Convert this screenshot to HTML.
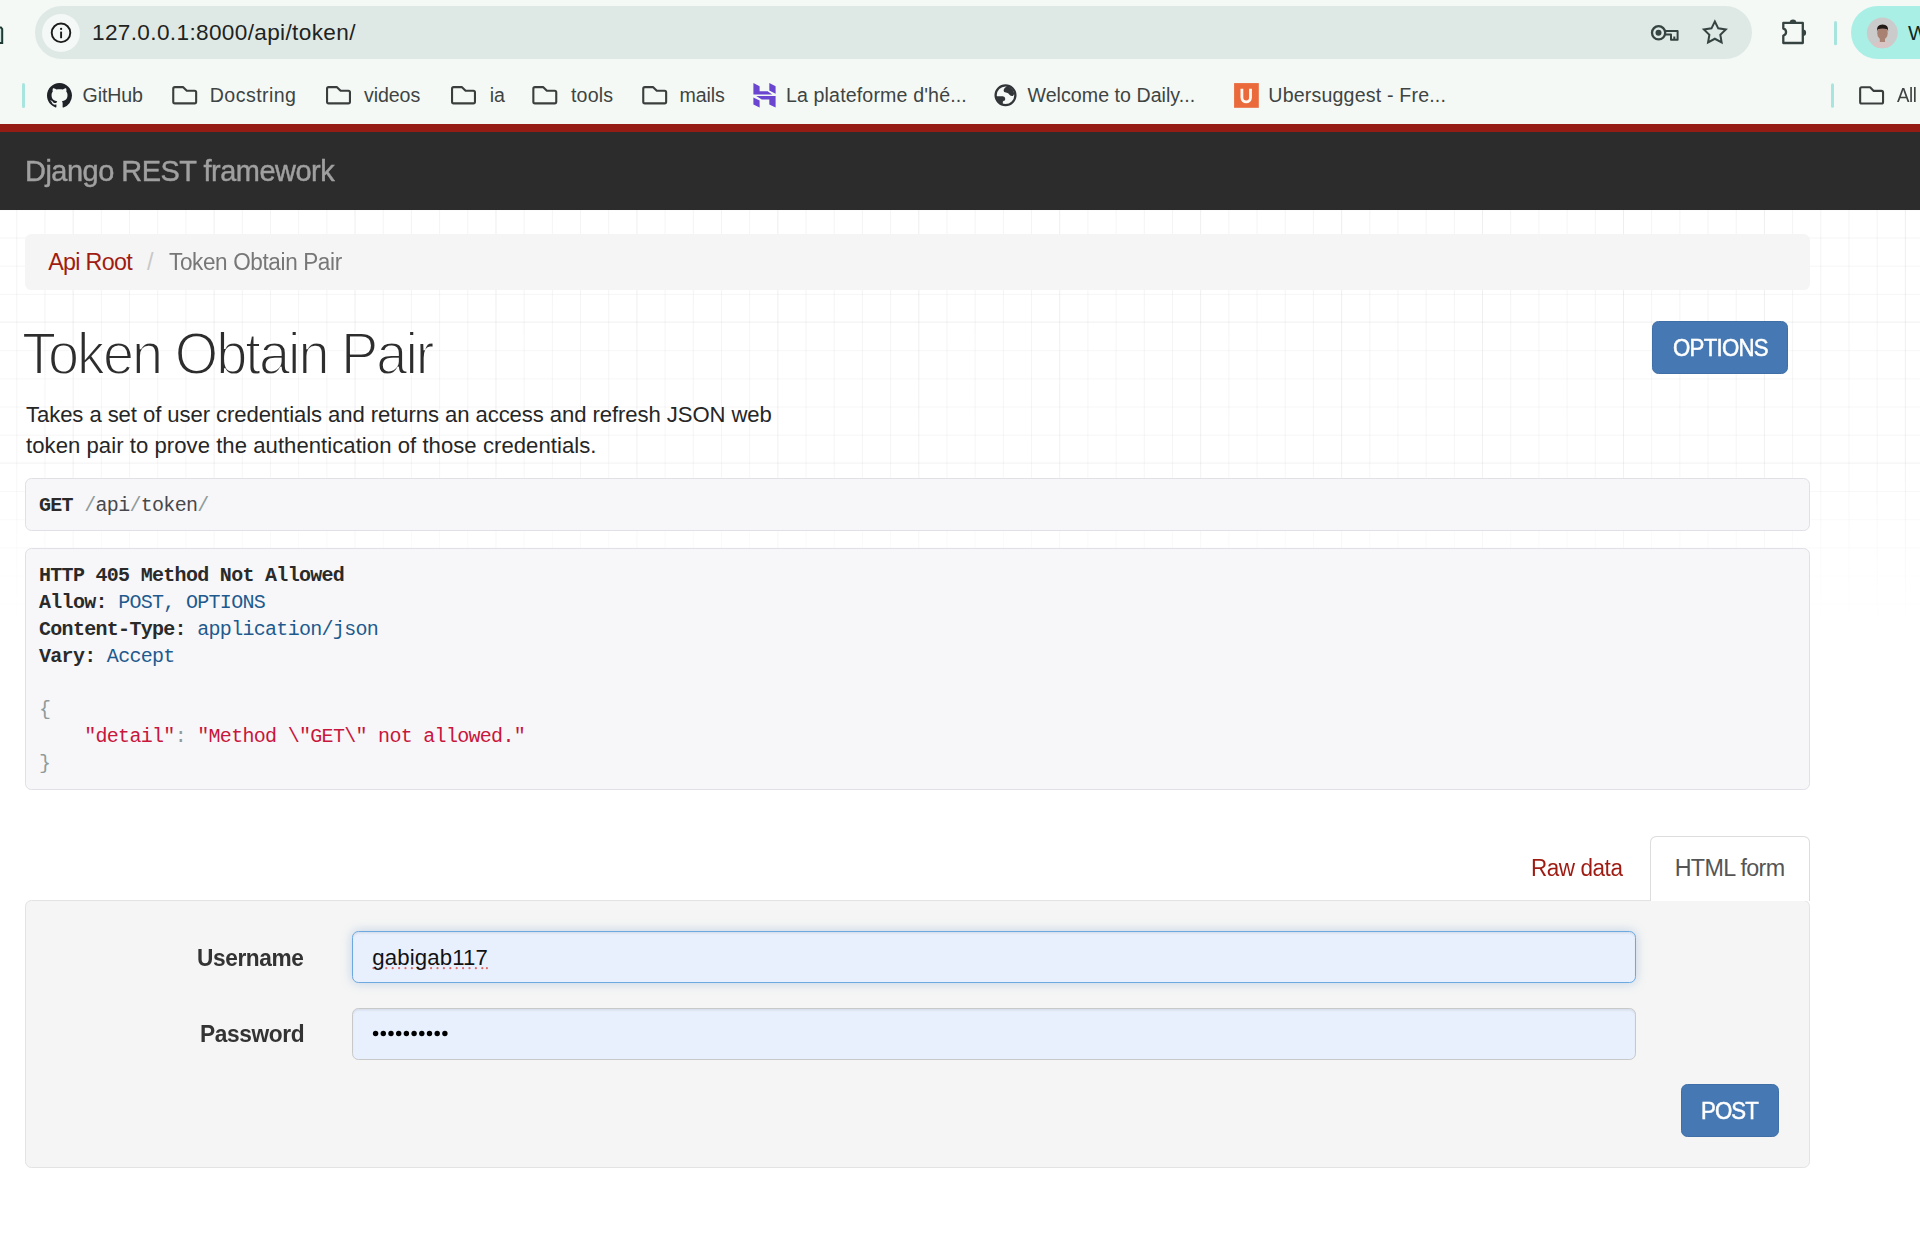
<!DOCTYPE html>
<html><head><meta charset="utf-8">
<style>
html,body{margin:0;padding:0;width:1920px;height:1236px;overflow:hidden;background:#fff;position:relative;font-family:"Liberation Sans",sans-serif}
.a{position:absolute;box-sizing:border-box}
.t{position:absolute;white-space:pre;line-height:1;font-family:"Liberation Sans",sans-serif}
.m{position:absolute;white-space:pre;line-height:1;font-family:"Liberation Mono",monospace;font-size:20px;letter-spacing:-0.7px;color:#48484c}
.m b{color:#2a2a2a;font-weight:700}
.m .lit{color:#1e5a8e}
.m .pun{color:#8f9b9b}
.m .str{color:#c8163c}
</style></head><body>
<!-- browser toolbar -->
<div class="a" style="left:0;top:0;width:1920px;height:124px;background:#f4f9f6"></div>
<div class="a" style="left:35px;top:6px;width:1717px;height:53px;border-radius:26.5px;background:#dee9e5"></div>
<div class="a" style="left:42px;top:14px;width:38px;height:38px;border-radius:19px;background:#f4f8f6"></div>
<div class="a" style="left:1851px;top:6px;width:120px;height:53px;border-radius:26.5px;background:#aaefe5"></div>
<svg class="a" style="left:0;top:0" width="1920" height="124" viewBox="0 0 1920 124">
  <defs>
    <path id="fold" d="M1.05 2.6Q1.05 1.05 2.6 1.05L11 1.05L14.6 4.7L22.4 4.7Q23.95 4.7 23.95 6.2L23.95 15.7Q23.95 17.25 22.4 17.25L2.6 17.25Q1.05 17.25 1.05 15.7Z" fill="none" stroke="#3a3f3d" stroke-width="2.1" stroke-linejoin="round"/>
  </defs>
  <!-- partial left icon -->
  <path d="M-4 27.5 L1 27.5 L2.2 29 L2.2 43 L-4 43" fill="#d4e6e1" stroke="#1f3a33" stroke-width="2"/>
  <!-- info icon -->
  <circle cx="61" cy="32.8" r="9.3" fill="none" stroke="#1b1b1b" stroke-width="1.9"/>
  <circle cx="61.1" cy="28.9" r="1.15" fill="#1b1b1b"/>
  <rect x="60.15" y="31.6" width="1.9" height="6.6" fill="#1b1b1b"/>
  <!-- key -->
  <g fill="none" stroke="#354341" stroke-width="2">
    <circle cx="1658.6" cy="32.8" r="6.6" stroke-width="2.3"/>
    <path d="M1665.2 30.9H1677.6V39.7H1671V34.5H1665.6" stroke-linejoin="round"/>
    <path d="M1674.3 36.5V39.7"/>
  </g>
  <circle cx="1658.5" cy="32.8" r="3" fill="#354341"/>
  <!-- star -->
  <polygon points="1714.85,21.50 1718.23,28.35 1725.79,29.45 1720.32,34.78 1721.61,42.30 1714.85,38.75 1708.09,42.30 1709.38,34.78 1703.91,29.45 1711.47,28.35" fill="none" stroke="#354341" stroke-width="2" stroke-linejoin="miter"/>
  <!-- puzzle -->
  <path d="M1783.3 22.9H1802.8V43H1783.3V35.6A3.6 3.6 0 0 0 1783.3 28.6Z" fill="none" stroke="#354341" stroke-width="2.3" stroke-linejoin="round"/>
  <path d="M1789.7 22.9A3.3 3.3 0 0 1 1796.3 22.9Z" fill="#354341"/>
  <path d="M1802.8 29.4A3.3 3.3 0 0 1 1802.8 36Z" fill="#354341"/>
  <!-- toolbar separator -->
  <rect x="1834" y="21" width="3" height="24.3" rx="1.5" fill="#a6e4dd"/>
  <!-- avatar -->
  <clipPath id="av"><circle cx="1882.3" cy="32.85" r="15.45"/></clipPath>
  <g clip-path="url(#av)">
    <rect x="1866" y="17" width="33" height="33" fill="#cbcbcb"/>
    <ellipse cx="1882.3" cy="47.5" rx="11.5" ry="6.5" fill="#d9c4c6"/>
    <rect x="1879.8" y="37" width="5.2" height="5" fill="#a88273"/>
    <ellipse cx="1882.5" cy="33.2" rx="5.2" ry="6.6" fill="#a98172"/>
    <path d="M1876.9 31.5 Q1876.3 24.6 1882.6 24.6 Q1888.8 24.6 1888.2 31.5 L1887.2 29.2 Q1882.6 27.6 1877.9 29.2Z" fill="#221a17"/>
  </g>
  <!-- bookmark separators -->
  <rect x="22" y="83" width="3" height="25" rx="1.5" fill="#a8e5de"/>
  <rect x="1831" y="83.3" width="3" height="24.5" rx="1.5" fill="#a8e5de"/>
  <!-- github -->
  <g transform="translate(47,83.1) scale(1.5625)">
    <path fill="#1f2328" d="M8 0C3.58 0 0 3.58 0 8c0 3.54 2.29 6.53 5.47 7.59.4.07.55-.17.55-.38 0-.19-.01-.82-.01-1.49-2.01.37-2.530-.49-2.69-.94-.09-.23-.48-.94-.82-1.13-.28-.15-.68-.52-.01-.53.63-.01 1.08.58 1.23.82.72 1.21 1.87.87 2.33.66.07-.52.28-.87.51-1.06-1.78-.2-3.64-.89-3.64-3.95 0-.87.31-1.59.82-2.15-.08-.2-.36-1.02.08-2.12 0 0 .67-.21 2.2.82.64-.18 1.32-.27 2-.27.68 0 1.36.09 2 .27 1.53-1.04 2.2-.82 2.2-.82.44 1.1.16 1.92.08 2.12.51.56.82 1.27.82 2.15 0 3.07-1.87 3.75-3.65 3.95.29.25.54.73.54 1.48 0 1.07-.01 1.930-.01 2.2 0 .21.15.46.55.38A8.013 8.013 0 0016 8c0-4.42-3.58-8-8-8z"/>
  </g>
  <!-- folders -->
  <use href="#fold" x="172.2" y="86.1"/>
  <use href="#fold" x="326" y="86.1"/>
  <use href="#fold" x="451" y="86.1"/>
  <use href="#fold" x="532.3" y="86.1"/>
  <use href="#fold" x="642.2" y="86.1"/>
  <use href="#fold" x="1859.1" y="86.2"/>
  <!-- hostinger H -->
  <g fill="#6a45d0">
    <polygon points="753.4,83.1 759.6,86.3 759.6,91.2 767.6,91.2 772.2,94.6 753.4,94.6"/>
    <polygon points="769.3,83.1 775.6,86.3 775.6,93.8 769.3,90.6"/>
    <polygon points="756.2,96.1 775.6,96.1 775.6,107.6 769.3,104.4 769.3,99.5 761.8,99.5"/>
    <polygon points="753.4,97.4 759.6,100.6 759.6,107.6 753.4,104.4"/>
  </g>
  <!-- globe -->
  <circle cx="1005.5" cy="95.3" r="9.9" fill="none" stroke="#333638" stroke-width="2.3"/>
  <path d="M1007.5 86.2 Q1003.8 87.6 1003.6 90.6 Q1003.5 92.4 1006 92.6 Q1008.5 92.9 1009.5 94.7 Q1010.8 96.4 1013 96 L1014.3 93.8 Q1013.6 88.5 1007.5 86.2Z" fill="#333638"/>
  <path d="M996.2 96.3 L1002.8 96.3 Q1005.2 96.6 1005.3 99 Q1005.2 100.9 1003.4 101 Q1002.6 101.6 1002.8 103.3 L1003.2 104.9 Q998 104 996.2 98.5Z" fill="#333638"/>
  <!-- ubersuggest -->
  <rect x="1234.1" y="83.1" width="24.7" height="24.7" fill="#ea6a3b"/>
  <path d="M1241.9 88.7V97.6A4.3 4.3 0 0 0 1250.5 97.6V88.7" fill="none" stroke="#fff8f2" stroke-width="2.8"/>
</svg>
<div class="t" style="left:1908px;top:21.5px;font-size:21px;color:#0b2b27">W</div>

<!-- page -->
<div class="a" style="left:0;top:210px;width:1920px;height:420px;
 background-image:linear-gradient(to right, rgba(0,0,0,.025) 0, rgba(0,0,0,.025) 1.4px, transparent 1.4px),linear-gradient(to bottom, rgba(0,0,0,.025) 0, rgba(0,0,0,.025) 1.4px, transparent 1.4px),linear-gradient(to right, rgba(0,0,0,.042) 0, rgba(0,0,0,.042) 1.4px, transparent 1.4px),linear-gradient(to bottom, rgba(0,0,0,.038) 0, rgba(0,0,0,.038) 1.4px, transparent 1.4px);
 background-size:140.95px 140.9px,140.95px 140.9px,28.19px 28.18px,28.19px 28.18px;background-position:72.7px 0,0 111px,16.3px 27.5px,16.3px 27.5px;
 -webkit-mask-image:linear-gradient(to bottom, #000 0, rgba(0,0,0,.85) 60%, rgba(0,0,0,0) 100%)"></div>
<div class="a" style="left:0;top:124px;width:1920px;height:8px;background:#951c15"></div>
<div class="a" style="left:0;top:132px;width:1920px;height:78px;background:#2c2c2c"></div>

<div class="a" style="left:25px;top:233.5px;width:1785px;height:56.5px;border-radius:6.4px;background:#f5f5f5"></div>
<div class="a" style="left:1652px;top:321px;width:136.2px;height:53.2px;border-radius:6.4px;background:#4679b3;border:1.6px solid #3f6fa6"></div>

<div class="a" style="left:25px;top:477.5px;width:1785px;height:53.5px;border-radius:6.4px;background:#f7f7f9;border:1.6px solid #e0e0e6"></div>
<div class="a" style="left:25px;top:548px;width:1785px;height:241.8px;border-radius:6.4px;background:#f7f7f9;border:1.6px solid #e0e0e6"></div>

<div class="m" id="mget" style="left:39px;top:495.5px"><b>GET</b> <span class="pun">/</span>api<span class="pun">/</span>token<span class="pun">/</span></div>
<div class="m" id="m1" style="left:39px;top:566px"><b>HTTP 405 Method Not Allowed</b></div>
<div class="m" id="m2" style="left:39px;top:593px"><b>Allow:</b> <span class="lit">POST, OPTIONS</span></div>
<div class="m" id="m3" style="left:39px;top:620px"><b>Content-Type:</b> <span class="lit">application/json</span></div>
<div class="m" id="m4" style="left:39px;top:647px"><b>Vary:</b> <span class="lit">Accept</span></div>
<div class="m" id="m5" style="left:39px;top:700px"><span class="pun">{</span></div>
<div class="m" id="m6" style="left:39px;top:727px">    <span class="str">"detail"</span><span class="pun">:</span> <span class="str">"Method \"GET\" not allowed."</span></div>
<div class="m" id="m7" style="left:39px;top:754px"><span class="pun">}</span></div>

<!-- tabs -->
<div class="a" style="left:25px;top:899.5px;width:1785px;height:268.3px;border-radius:6.4px;background:#f5f5f5;border:1.6px solid #e3e3e3"></div>
<div class="a" style="left:1649.5px;top:835.5px;width:160.5px;height:65px;border-radius:6.4px 6.4px 0 0;background:#fff;border:1.6px solid #dddddd;border-bottom:none"></div>

<div class="a" style="left:351.7px;top:931px;width:1284.8px;height:52.1px;border-radius:6.4px;background:#e8f0fe;border:1.6px solid #6ea8e0;box-shadow:inset 0 1.6px 1.6px rgba(0,0,0,.075),0 0 11px rgba(102,150,200,.38)"></div>
<div class="a" style="left:351.7px;top:1008px;width:1284.8px;height:51.6px;border-radius:6.4px;background:#e8f0fe;border:1.6px solid #c8c8c8;box-shadow:inset 0 1.6px 1.6px rgba(0,0,0,.075)"></div>
<svg class="a" style="left:0;top:900px" width="700" height="200" viewBox="0 900 700 200">
  <g fill="#000">
    <circle cx="375.6" cy="1033.5" r="2.7"/><circle cx="383.3" cy="1033.5" r="2.7"/><circle cx="391" cy="1033.5" r="2.7"/><circle cx="398.7" cy="1033.5" r="2.7"/><circle cx="406.4" cy="1033.5" r="2.7"/>
    <circle cx="414.1" cy="1033.5" r="2.7"/><circle cx="421.8" cy="1033.5" r="2.7"/><circle cx="429.5" cy="1033.5" r="2.7"/><circle cx="437.2" cy="1033.5" r="2.7"/><circle cx="444.9" cy="1033.5" r="2.7"/>
  </g>
  <g fill="#e06a66">
    <circle cx="373.5" cy="968.2" r="1.1"/><circle cx="379.9" cy="968.2" r="1.1"/><circle cx="386.3" cy="968.2" r="1.1"/><circle cx="392.7" cy="968.2" r="1.1"/><circle cx="399.1" cy="968.2" r="1.1"/><circle cx="405.5" cy="968.2" r="1.1"/><circle cx="411.9" cy="968.2" r="1.1"/><circle cx="418.3" cy="968.2" r="1.1"/><circle cx="424.7" cy="968.2" r="1.1"/><circle cx="431.1" cy="968.2" r="1.1"/><circle cx="437.5" cy="968.2" r="1.1"/><circle cx="443.9" cy="968.2" r="1.1"/><circle cx="450.3" cy="968.2" r="1.1"/><circle cx="456.7" cy="968.2" r="1.1"/><circle cx="463.1" cy="968.2" r="1.1"/><circle cx="469.5" cy="968.2" r="1.1"/><circle cx="475.9" cy="968.2" r="1.1"/><circle cx="482.3" cy="968.2" r="1.1"/><circle cx="486.9" cy="968.2" r="1.1"/>
  </g>
</svg>
<div class="a" style="left:1680.5px;top:1084px;width:98.5px;height:53px;border-radius:6.4px;background:#4679b3;border:1.6px solid #3f6fa6"></div>

<div id="url" class="t" style="left:92.00px;top:22.06px;font-size:22.6px;font-weight:400;color:#1f2321;letter-spacing:0.350px;">127.0.0.1:8000/api/token/</div>
<div id="bm1" class="t" style="left:82.50px;top:86.16px;font-size:19.6px;font-weight:400;color:#3f4442;letter-spacing:-0.100px;">GitHub</div>
<div id="bm2" class="t" style="left:209.80px;top:86.16px;font-size:19.6px;font-weight:400;color:#3f4442;letter-spacing:0.425px;">Docstring</div>
<div id="bm3" class="t" style="left:363.90px;top:86.16px;font-size:19.6px;font-weight:400;color:#3f4442;letter-spacing:-0.060px;">videos</div>
<div id="bm4" class="t" style="left:489.70px;top:86.16px;font-size:19.6px;font-weight:400;color:#3f4442;letter-spacing:0.000px;">ia</div>
<div id="bm5" class="t" style="left:570.90px;top:86.16px;font-size:19.6px;font-weight:400;color:#3f4442;letter-spacing:0.200px;">tools</div>
<div id="bm6" class="t" style="left:679.60px;top:86.16px;font-size:19.6px;font-weight:400;color:#3f4442;letter-spacing:-0.100px;">mails</div>
<div id="bm7" class="t" style="left:785.90px;top:86.16px;font-size:19.6px;font-weight:400;color:#3f4442;letter-spacing:0.145px;">La plateforme d'hé...</div>
<div id="bm8" class="t" style="left:1027.50px;top:86.16px;font-size:19.6px;font-weight:400;color:#3f4442;letter-spacing:0.039px;">Welcome to Daily...</div>
<div id="bm9" class="t" style="left:1268.30px;top:86.16px;font-size:19.6px;font-weight:400;color:#3f4442;letter-spacing:0.179px;">Ubersuggest - Fre...</div>
<div id="bm10" class="t" style="left:1897.00px;top:86.36px;font-size:19.6px;font-weight:400;color:#3f4442;letter-spacing:-0.512px;transform:scaleX(0.9535);transform-origin:0 0;">All</div>
<div id="brand" class="t" style="left:25.03px;top:155.86px;font-size:29.9px;font-weight:400;color:#a0a0a0;letter-spacing:-0.516px;transform:scaleX(0.9687);transform-origin:0 0;-webkit-text-stroke:0.45px #a0a0a0;">Django REST framework</div>
<div id="bc1" class="t" style="left:48.30px;top:251.26px;font-size:23.3px;font-weight:400;color:#a01c12;letter-spacing:-0.714px;">Api Root</div>
<div id="bc2" class="t" style="left:146.90px;top:251.26px;font-size:23.3px;font-weight:400;color:#c8c8c8;letter-spacing:0.000px;">/</div>
<div id="bc3" class="t" style="left:168.75px;top:251.26px;font-size:23.3px;font-weight:400;color:#777777;letter-spacing:-0.383px;transform:scaleX(0.9671);transform-origin:0 0;">Token Obtain Pair</div>
<div id="h1" class="t" style="left:22.32px;top:324.42px;font-size:59.8px;font-weight:400;color:#2d2d2d;letter-spacing:-2.135px;transform:scaleX(0.9350);transform-origin:0 0;-webkit-text-stroke:1.8px #fff;">Token Obtain Pair</div>
<div id="d1" class="t" style="left:26.00px;top:403.55px;font-size:22.1px;font-weight:400;color:#262626;letter-spacing:-0.079px;">Takes a set of user credentials and returns an access and refresh JSON web</div>
<div id="d2" class="t" style="left:26.00px;top:434.95px;font-size:22.1px;font-weight:400;color:#262626;letter-spacing:0.051px;">token pair to prove the authentication of those credentials.</div>
<div id="opt" class="t" style="left:1672.60px;top:337.36px;font-size:23.3px;font-weight:400;color:#ffffff;letter-spacing:-0.784px;transform:scaleX(0.9547);transform-origin:0 0;-webkit-text-stroke:0.5px #ffffff;">OPTIONS</div>
<div id="raw" class="t" style="left:1531.33px;top:857.06px;font-size:23.3px;font-weight:400;color:#9d1b12;letter-spacing:-0.472px;transform:scaleX(0.9663);transform-origin:0 0;">Raw data</div>
<div id="htf" class="t" style="left:1674.70px;top:857.06px;font-size:23.3px;font-weight:400;color:#555555;letter-spacing:-0.650px;">HTML form</div>
<div id="lu" class="t" style="left:196.53px;top:946.50px;font-size:23.3px;font-weight:700;color:#333333;letter-spacing:-0.416px;transform:scaleX(0.9740);transform-origin:0 0;">Username</div>
<div id="lp" class="t" style="left:200.28px;top:1023.00px;font-size:23.3px;font-weight:700;color:#333333;letter-spacing:-0.398px;transform:scaleX(0.9742);transform-origin:0 0;">Password</div>
<div id="inp" class="t" style="left:372.20px;top:946.95px;font-size:22.2px;font-weight:400;color:#111111;letter-spacing:0.144px;">gabigab117</div>
<div id="post" class="t" style="left:1700.65px;top:1100.46px;font-size:23.3px;font-weight:400;color:#ffffff;letter-spacing:-0.973px;transform:scaleX(0.9537);transform-origin:0 0;-webkit-text-stroke:0.5px #ffffff;">POST</div>
</body></html>
